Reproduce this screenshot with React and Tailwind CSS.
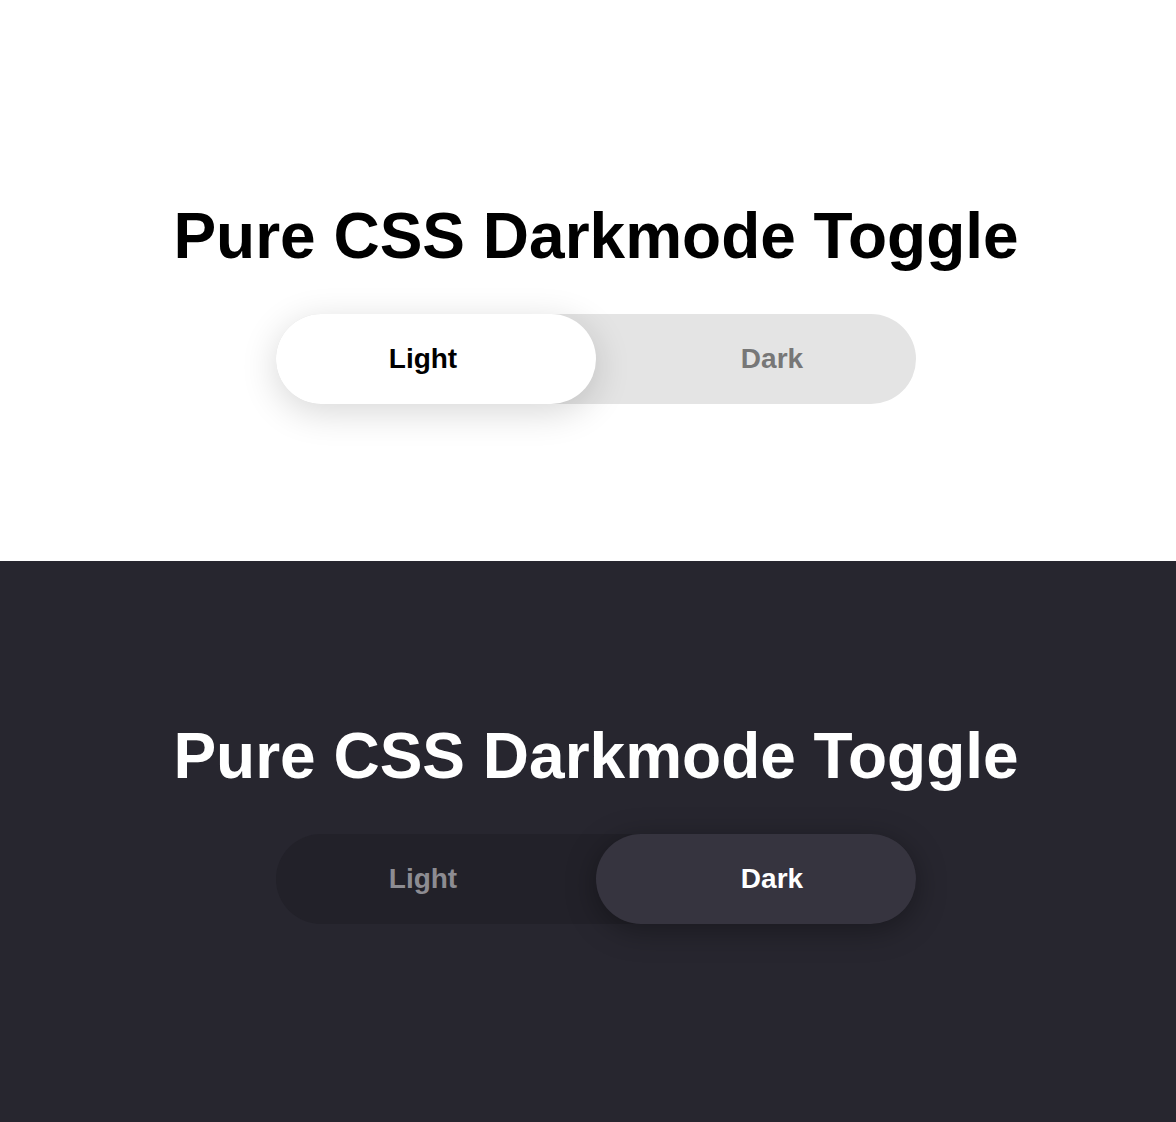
import React from 'react';

const Toggle = ({ dark }) => (
  <div
    className={
      'relative flex h-[90px] w-[640px] rounded-full ' +
      (dark ? 'bg-[#222129]' : 'bg-[#e4e4e4]')
    }
  >
    <div
      className={
        'absolute top-0 h-[90px] w-[320px] rounded-full ' +
        (dark
          ? 'left-[320px] bg-[#36343f] shadow-[0_6px_30px_rgba(0,0,0,0.35)]'
          : 'left-0 bg-white shadow-[0_8px_36px_rgba(0,0,0,0.16)]')
      }
    />
    <div className="relative flex w-[320px] items-center justify-center pr-[26px]">
      <span className={'text-[28px] font-bold ' + (dark ? 'text-[#8d8c92]' : 'text-black')}>Light</span>
    </div>
    <div className="relative flex w-[320px] items-center justify-center pl-[32px]">
      <span className={'text-[28px] font-bold ' + (dark ? 'text-white' : 'text-[#777777]')}>Dark</span>
    </div>
  </div>
);

const Section = ({ dark }) => (
  <section
    className={
      'flex h-[561px] flex-col items-center pl-4 ' +
      (dark ? 'bg-[#27262f] pt-[163px] text-white' : 'bg-white pt-[204px] text-black')
    }
  >
    <h1 className="text-[64px] font-bold leading-none">Pure CSS Darkmode Toggle</h1>
    <div className="mt-[46px]">
      <Toggle dark={dark} />
    </div>
  </section>
);

export default function App() {
  return (
    <div className="w-[1176px] font-['Liberation_Sans',Arial,sans-serif]">
      <Section />
      <Section dark />
    </div>
  );
}
